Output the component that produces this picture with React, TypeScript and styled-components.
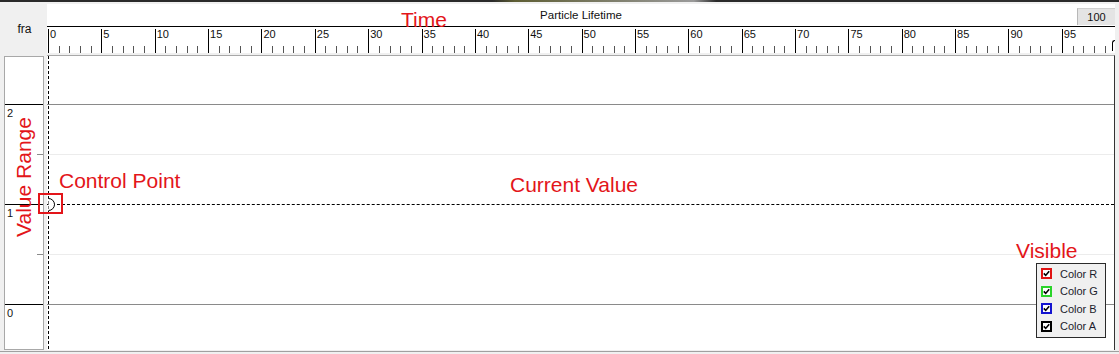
import React from "react";
import styled, { createGlobalStyle } from "styled-components";

const GlobalStyle = createGlobalStyle`
  html, body {
    margin: 0;
    padding: 0;
    background: #f0f0f0;
  }
  body {
    font-family: "Liberation Sans", Arial, sans-serif;
    overflow: hidden;
  }
`;

const Page = styled.div`
  position: relative;
  width: 1119px;
  height: 354px;
  background: #f0f0f0;
  display: flex;
  flex-direction: column;
`;

const TopStrip = styled.div`
  height: 2px;
  background: linear-gradient(
    90deg,
    #2a2a2a 0%,
    #2a2a2a 44%,
    #5e5e34 46%,
    #9a9a9a 62%,
    #2a2a2a 64%,
    #2a2a2a 100%
  );
`;

const HeaderRow = styled.div`
  display: flex;
  margin-top: 2px;
  height: 49px;
`;

const FrameLabel = styled.div`
  width: 47px;
  box-sizing: border-box;
  padding-left: 2px;
  display: flex;
  align-items: center;
  justify-content: center;
  font-size: 12px;
  color: #111;
`;

const Ruler = styled.div`
  width: 1068px;
  display: flex;
  flex-direction: column;
  background: #fff;
`;

const TitleBar = styled.div`
  display: grid;
  grid-template-columns: 38px 1fr 38px;
  height: 23px;
  box-sizing: border-box;
  border-bottom: 1px solid #000;
`;

const Title = styled.div`
  grid-column: 2;
  text-align: center;
  font-size: 11.5px;
  line-height: 22px;
  color: #111;
`;

const LifetimeBox = styled.div`
  margin-top: 4px;
  height: 17px;
  box-sizing: border-box;
  background: #e4e4e4;
  border-left: 1px solid #b8b8b8;
  border-top: 1px solid #cfcfcf;
  display: flex;
  align-items: center;
  justify-content: center;
  font-size: 11px;
  color: #111;
`;

const TickArea = styled.div`
  position: relative;
  height: 26px;
  box-sizing: border-box;
  padding-left: 1px;
  display: flex;
`;

const TickCell = styled.div`
  flex: 1 1 0;
  min-width: 0;
  display: flex;
  align-items: flex-end;
`;

const Tick = styled.div<{ $major: boolean }>`
  flex-shrink: 0;
  width: 1px;
  height: ${(p) => (p.$major ? 24 : 7)}px;
  background: ${(p) => (p.$major ? "#000" : "#555")};
`;

const TickLabel = styled.span`
  align-self: flex-start;
  margin-top: 2px;
  margin-left: 1px;
  font-size: 11px;
  line-height: 11px;
  white-space: nowrap;
  color: #111;
`;

const EndMarker = styled.div`
  position: absolute;
  right: 0;
  bottom: 2px;
  width: 3px;
  height: 11px;
  box-sizing: border-box;
  border-left: 1px solid #000;
  border-top: 1px solid #000;
  border-top-left-radius: 3px;
`;

const Body = styled.div`
  display: flex;
  align-items: flex-start;
  margin-top: 2px;
  height: 295px;
`;

const AxisPanel = styled.div`
  margin-left: 4px;
  margin-top: 1px;
  width: 40px;
  height: 294px;
  box-sizing: border-box;
  border: 1px solid #a8a8a8;
  background: #fff;
  display: grid;
  grid-template-rows: 47px 50px 50px 50px 50px 1fr;
`;

type Line = "none" | "major" | "minor" | "current";

const AxisRow = styled.div<{ $line: Line }>`
  position: relative;
  box-sizing: border-box;
  padding: 2px 0 0 2px;
  font-size: 11px;
  line-height: 12px;
  color: #111;
  border-top: ${(p) => (p.$line === "major" ? "1px solid #000" : "none")};
  &::before {
    content: "";
    display: ${(p) => (p.$line === "minor" ? "block" : "none")};
    position: absolute;
    top: 0;
    right: 0;
    width: 6px;
    height: 1px;
    background: #8a8a8a;
  }
`;

const Graph = styled.div`
  position: relative;
  margin-left: 3px;
  width: 1068px;
  height: 295px;
  box-sizing: border-box;
  border-top: 1px solid #a8a8a8;
  border-right: 1px solid #333;
  background: #fff;
  display: grid;
  grid-template-rows: 48px 50px 50px 50px 50px 1fr;
`;

const lineStyle: Record<Line, string> = {
  none: "none",
  major: "1px solid #8a8a8a",
  minor: "1px solid #ececec",
  current: "1px dashed #000",
};

const GridRow = styled.div<{ $line: Line }>`
  border-top: ${(p) => lineStyle[p.$line]};
`;

const Cursor = styled.div`
  position: absolute;
  left: 1px;
  top: 0;
  bottom: 0;
  width: 1px;
  background: repeating-linear-gradient(
    to bottom,
    #000 0,
    #000 3px,
    transparent 3px,
    transparent 5px
  );
`;

const ControlPoint = styled.svg`
  position: absolute;
  left: 1px;
  top: 142px;
`;

const Legend = styled.div`
  position: absolute;
  right: 8px;
  bottom: 12px;
  width: 70px;
  height: 75px;
  box-sizing: border-box;
  border: 1px solid #2a2a2a;
  background: #f0f0f0;
  padding: 1px 0 0 4px;
`;

const LegendRow = styled.div`
  height: 17.5px;
  display: flex;
  align-items: center;
  gap: 8px;
  font-size: 11px;
  color: #1c1c2c;
`;

const CheckBox = styled.span<{ $color: string }>`
  width: 11px;
  height: 11px;
  box-sizing: border-box;
  border: 2px solid ${(p) => p.$color};
  background: #fff;
  display: flex;
  align-items: center;
  justify-content: center;
`;

const BottomEdge = styled.div`
  margin-top: 1px;
  height: 1px;
  background: #a0a0a0;
`;

const Note = styled.span<{ $x: number; $y: number }>`
  position: absolute;
  left: ${(p) => p.$x}px;
  top: ${(p) => p.$y}px;
  font-size: 21px;
  line-height: 21px;
  color: #e3151a;
  white-space: nowrap;
`;

const VerticalNote = styled(Note)`
  width: 130px;
  height: 24px;
  line-height: 24px;
  text-align: center;
  transform: rotate(-90deg);
`;

const Marker = styled.div`
  position: absolute;
  left: 38px;
  top: 193px;
  width: 25px;
  height: 21px;
  box-sizing: border-box;
  border: 2px solid #e3151a;
`;

const channels = [
  { name: "Color R", color: "#e01414" },
  { name: "Color G", color: "#2ad42a" },
  { name: "Color B", color: "#1414d0" },
  { name: "Color A", color: "#000" },
];

const axisRows: { line: Line; label?: string }[] = [
  { line: "none" },
  { line: "major", label: "2" },
  { line: "minor" },
  { line: "major", label: "1" },
  { line: "minor" },
  { line: "major", label: "0" },
];

const graphRows: Line[] = ["none", "major", "minor", "current", "minor", "major"];

const Check = () => (
  <svg width="7" height="7" viewBox="0 0 7 7">
    <path d="M0.8 3.4 L2.7 5.4 L6.2 1.2" fill="none" stroke="#000" strokeWidth="1.6" />
  </svg>
);

const App = () => {
  return (
    <>
      <GlobalStyle />
      <Page>
        <TopStrip />
        <HeaderRow>
          <FrameLabel>fra</FrameLabel>
          <Ruler>
            <TitleBar>
              <Title>Particle Lifetime</Title>
              <LifetimeBox>100</LifetimeBox>
            </TitleBar>
            <TickArea>
              {Array.from({ length: 100 }, (_, i) => (
                <TickCell key={i}>
                  <Tick $major={i % 5 === 0} />
                  {i % 5 === 0 && <TickLabel>{i}</TickLabel>}
                </TickCell>
              ))}
              <EndMarker />
            </TickArea>
          </Ruler>
        </HeaderRow>
        <Body>
          <AxisPanel>
            {axisRows.map((r, i) => (
              <AxisRow key={i} $line={r.line}>
                {r.label}
              </AxisRow>
            ))}
          </AxisPanel>
          <Graph>
            {graphRows.map((l, i) => (
              <GridRow key={i} $line={l} />
            ))}
            <Cursor />
            <ControlPoint width="8" height="13" viewBox="0 0 8 13">
              <path d="M0.5 0.5 A6 6 0 0 1 0.5 12.5" fill="#fff" stroke="#000" strokeWidth="1" />
            </ControlPoint>
            <Legend>
              {channels.map((c) => (
                <LegendRow key={c.name}>
                  <CheckBox $color={c.color}>
                    <Check />
                  </CheckBox>
                  {c.name}
                </LegendRow>
              ))}
            </Legend>
          </Graph>
        </Body>
        <BottomEdge />
        <Note $x={401} $y={9}>Time</Note>
        <Note $x={59} $y={170}>Control Point</Note>
        <Note $x={510} $y={174}>Current Value</Note>
        <Note $x={1016} $y={240}>Visible</Note>
        <VerticalNote $x={-41} $y={165}>Value Range</VerticalNote>
        <Marker />
      </Page>
    </>
  );
};

export default App;
